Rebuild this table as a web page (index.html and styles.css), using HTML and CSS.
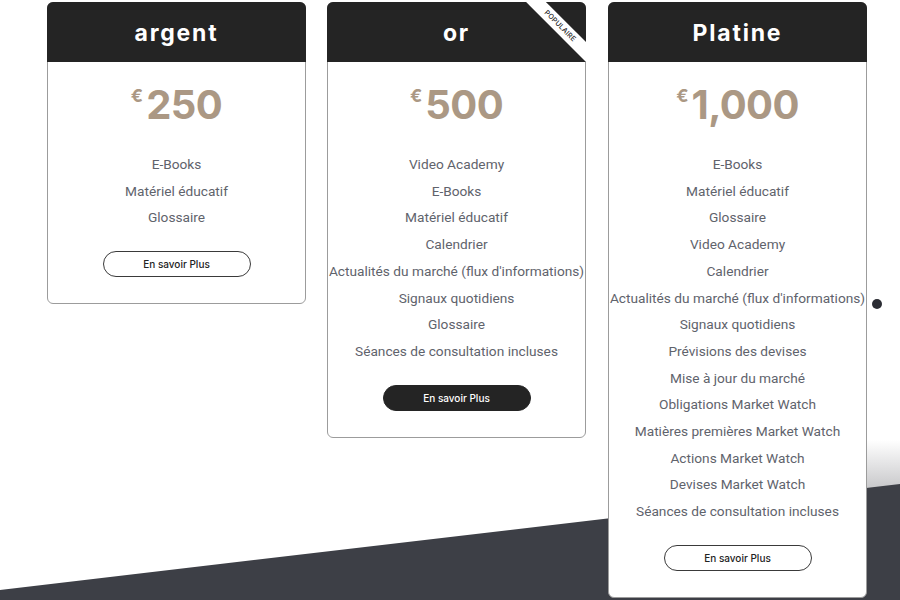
FILE: index.html
```html
<!DOCTYPE html>
<html lang="fr">
<head>
<meta charset="utf-8">
<title>Plans</title>
<link rel="stylesheet" href="styles.css">
</head>
<body>
<div class="shade"></div>
<div class="backdrop"></div>
<div class="plans">
  <div class="card">
    <div class="card-head"><h2>argent</h2></div>
    <div class="price"><span class="cur">€</span><span class="amt">250</span></div>
    <ul class="features">
      <li>E-Books</li>
      <li>Matériel éducatif</li>
      <li>Glossaire</li>
    </ul>
    <a class="btn" href="#">En savoir Plus</a>
  </div>
  <div class="card">
    <div class="card-head"><h2>or</h2><span class="ribbon">POPULAIRE</span></div>
    <div class="price"><span class="cur">€</span><span class="amt">500</span></div>
    <ul class="features">
      <li>Video Academy</li>
      <li>E-Books</li>
      <li>Matériel éducatif</li>
      <li>Calendrier</li>
      <li>Actualités du marché (flux d'informations)</li>
      <li>Signaux quotidiens</li>
      <li>Glossaire</li>
      <li>Séances de consultation incluses</li>
    </ul>
    <a class="btn btn-dark" href="#">En savoir Plus</a>
  </div>
  <div class="card">
    <div class="card-head"><h2>Platine</h2></div>
    <div class="price"><span class="cur">€</span><span class="amt">1,000</span></div>
    <ul class="features">
      <li>E-Books</li>
      <li>Matériel éducatif</li>
      <li>Glossaire</li>
      <li>Video Academy</li>
      <li>Calendrier</li>
      <li>Actualités du marché (flux d'informations)</li>
      <li>Signaux quotidiens</li>
      <li>Prévisions des devises</li>
      <li>Mise à jour du marché</li>
      <li>Obligations Market Watch</li>
      <li>Matières premières Market Watch</li>
      <li>Actions Market Watch</li>
      <li>Devises Market Watch</li>
      <li>Séances de consultation incluses</li>
    </ul>
    <a class="btn" href="#">En savoir Plus</a>
  </div>
  <span class="dot"></span>
</div>
</body>
</html>
```
FILE: styles.css
```css
html, body {
  margin: 0;
  padding: 0;
  background: #ffffff;
}
body {
  font-family: Inter, "Liberation Sans", sans-serif;
  width: 900px;
  height: 600px;
  overflow: hidden;
  position: relative;
}
.shade {
  position: absolute;
  inset: 0;
  z-index: 0;
  background: linear-gradient(to bottom, rgba(200, 200, 202, 0) 440px, #cbcbcd 486px);
  clip-path: polygon(600px 600px, 900px 400px, 900px 600px);
}
.backdrop {
  position: absolute;
  inset: 0;
  z-index: 0;
  background: #3d3f46;
  clip-path: polygon(0 590px, 900px 484px, 900px 600px, 0 600px);
}
.plans {
  position: relative;
  z-index: 1;
  display: flex;
  align-items: flex-start;
  padding: 2px 0 0 47px;
}
.card {
  width: 259px;
  box-sizing: border-box;
  border: 1px solid #9c9c9c;
  border-radius: 6px;
  background: #ffffff;
  text-align: center;
  padding-bottom: 26px;
  margin-right: 21px;
  flex: none;
}
.card:nth-child(2) {
  margin-right: 22px;
}
.card-head {
  position: relative;
  overflow: hidden;
  height: 60px;
  margin: -1px -1px 0;
  border-radius: 6px 6px 0 0;
  background: #242424;
  display: flex;
  align-items: center;
  justify-content: center;
}
.card-head h2 {
  margin: 2px 0 0;
  color: #ffffff;
  font-size: 23px;
  font-weight: 700;
  letter-spacing: 1.8px;
  padding-left: 0;
}
.ribbon {
  position: absolute;
  top: 17px;
  right: -34px;
  width: 120px;
  height: 14px;
  line-height: 14px;
  background: #ffffff;
  color: #242424;
  font-size: 7px;
  font-weight: 500;
  letter-spacing: 0.2px;
  transform: rotate(45deg);
  text-align: center;
}
.price {
  margin-top: 22px;
  height: 42px;
  display: flex;
  justify-content: center;
  align-items: flex-start;
  color: #ab9884;
  font-weight: 700;
}
.cur {
  font-size: 18px;
  line-height: 18px;
  margin-top: 3px;
  margin-right: 3px;
}
.amt {
  font-size: 40px;
  line-height: 42px;
  letter-spacing: -0.6px;
}
.features {
  list-style: none;
  margin: 25px 0 0;
  padding: 0;
  font-family: Roboto, "Liberation Sans", sans-serif;
  font-size: 13.7px;
  line-height: 26.7px;
  color: #5f636c;
  white-space: nowrap;
}
.btn {
  display: block;
  width: 148px;
  height: 26px;
  box-sizing: border-box;
  margin: 20px auto 0;
  border: 1px solid #3a3a3a;
  border-radius: 13px;
  font-size: 10px;
  line-height: 24px;
  font-weight: 500;
  color: #222222;
  text-decoration: none;
}
.btn-dark {
  background: #242424;
  border-color: #242424;
  color: #ffffff;
}
.dot {
  flex: none;
  width: 10px;
  height: 10px;
  border-radius: 50%;
  background: #2b2d34;
  align-self: center;
  margin-top: 9px;
  margin-left: -16px;
}
```
